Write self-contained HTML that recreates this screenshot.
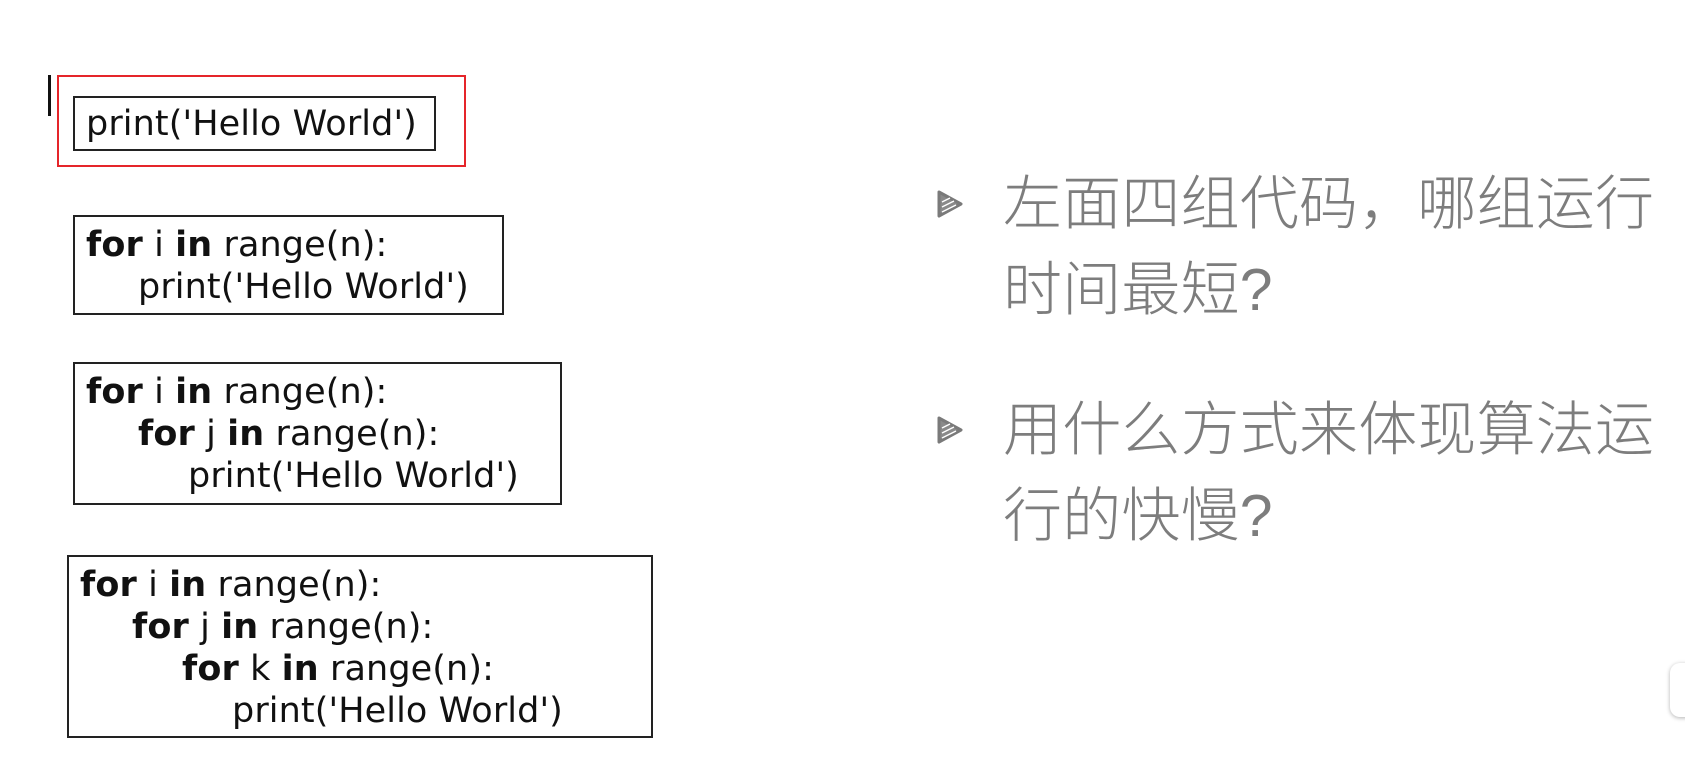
<!DOCTYPE html>
<html><head><meta charset="utf-8"><style>
body{margin:0;width:1685px;height:780px;background:#fff;position:relative;overflow:hidden;font-family:"DejaVu Sans","Liberation Sans",sans-serif;}
.b{position:absolute;border:2px solid #222;box-sizing:border-box;}
.c{position:absolute;font-size:35px;line-height:42px;color:#111;white-space:pre;letter-spacing:0.1px;}
.c b{font-weight:bold}
.i1{display:inline-block;width:52px}.i2{display:inline-block;width:102px}.i3{display:inline-block;width:152px}
.t{position:absolute;left:1003px;font-family:"Liberation Sans","Noto Sans CJK SC",sans-serif;font-size:59px;line-height:86px;color:#7d7d7d;font-weight:300;letter-spacing:0.2px;}
.tri{position:absolute;left:937px;}
</style></head><body>
<div style="position:absolute;left:48px;top:75px;width:3px;height:41px;background:#111"></div>
<div class="b" style="left:57px;top:75px;width:409px;height:92px;border-color:#e5252a;"></div>
<div class="b" style="left:73px;top:96px;width:363px;height:55px;"></div>
<div class="c" style="left:86px;top:103px;">print('Hello World')</div>

<div class="b" style="left:73px;top:215px;width:431px;height:100px;"></div>
<div class="c" style="left:86px;top:224px;"><b>for</b> i <b>in</b> range(n):
<span class="i1"></span>print('Hello World')</div>

<div class="b" style="left:73px;top:362px;width:489px;height:143px;"></div>
<div class="c" style="left:86px;top:371px;"><b>for</b> i <b>in</b> range(n):
<span class="i1"></span><b>for</b> j <b>in</b> range(n):
<span class="i2"></span>print('Hello World')</div>

<div class="b" style="left:67px;top:555px;width:586px;height:183px;"></div>
<div class="c" style="left:80px;top:564px;"><b>for</b> i <b>in</b> range(n):
<span class="i1"></span><b>for</b> j <b>in</b> range(n):
<span class="i2"></span><b>for</b> k <b>in</b> range(n):
<span class="i3"></span>print('Hello World')</div>

<svg class="tri" style="top:190px" width="26" height="28" viewBox="0 0 26 28"><path d="M2 2 L24 14 L2 26 Z" fill="#8a8a8a" stroke="#7a7a7a" stroke-width="3" stroke-linejoin="round"/><path d="M5 12 L13 8 M5 17 L17 11 M5 22 L19 15" stroke="#fff" stroke-width="1.5"/></svg>
<div class="t" style="top:161px;">左面四组代码，哪组运行<br>时间最短?</div>
<svg class="tri" style="top:416px" width="26" height="28" viewBox="0 0 26 28"><path d="M2 2 L24 14 L2 26 Z" fill="#8a8a8a" stroke="#7a7a7a" stroke-width="3" stroke-linejoin="round"/><path d="M5 12 L13 8 M5 17 L17 11 M5 22 L19 15" stroke="#fff" stroke-width="1.5"/></svg>
<div class="t" style="top:387px;">用什么方式来体现算法运<br>行的快慢?</div>

<div style="position:absolute;left:1670px;top:663px;width:40px;height:54px;border-radius:10px;background:#fff;box-shadow:0 1px 4px rgba(0,0,0,.3);"></div>
</body></html>
